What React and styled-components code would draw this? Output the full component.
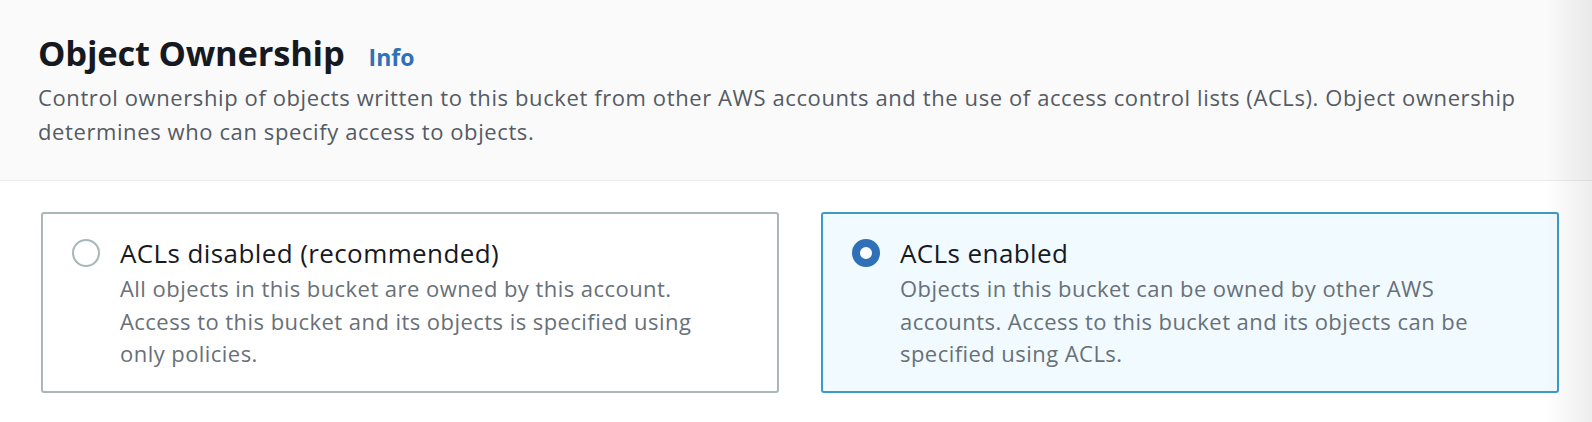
import React, { useState } from 'react';
import styled, { createGlobalStyle } from 'styled-components';

const GlobalStyle = createGlobalStyle`
  html, body {
    margin: 0;
    padding: 0;
    background: #ffffff;
  }
  body {
    font-family: "Open Sans", Roboto, Arial, sans-serif;
    -webkit-font-smoothing: antialiased;
  }
`;

const options = [
  {
    id: 'disabled',
    label: 'ACLs disabled (recommended)',
    description:
      'All objects in this bucket are owned by this account. Access to this bucket and its objects is specified using only policies.',
  },
  {
    id: 'enabled',
    label: 'ACLs enabled',
    description:
      'Objects in this bucket can be owned by other AWS accounts. Access to this bucket and its objects can be specified using ACLs.',
  },
];

const App = () => {
  const [selected, setSelected] = useState('enabled');

  return (
    <>
      <GlobalStyle />
      <Panel>
        <Header>
          <TitleRow>
            <Title>Object Ownership</Title>
            <InfoLink href="#">Info</InfoLink>
          </TitleRow>
          <Description>
            Control ownership of objects written to this bucket from other AWS accounts and the use of
            access control lists (ACLs). Object ownership determines who can specify access to objects.
          </Description>
        </Header>
        <Body>
          <Tiles>
            {options.map((opt) => (
              <Tile
                key={opt.id}
                $selected={selected === opt.id}
                onClick={() => setSelected(opt.id)}
              >
                <Radio $checked={selected === opt.id} />
                <TileText>
                  <TileLabel>{opt.label}</TileLabel>
                  <TileDescription>{opt.description}</TileDescription>
                </TileText>
              </Tile>
            ))}
          </Tiles>
        </Body>
      </Panel>
    </>
  );
};

export default App;

const Panel = styled.div`
  position: relative;
  width: 1592px;
  height: 422px;
  overflow: hidden;
  background: #ffffff;

  &::after {
    content: '';
    position: absolute;
    top: 0;
    right: 0;
    width: 46px;
    height: 100%;
    pointer-events: none;
    background: linear-gradient(to right, rgba(0, 0, 0, 0), rgba(0, 0, 0, 0.07));
  }
`;

const Header = styled.div`
  background: #fafafa;
  border-bottom: 1px solid #e9ebed;
  padding: 31px 30px 0 38px;
  height: 181px;
  box-sizing: border-box;
`;

const TitleRow = styled.div`
  display: flex;
  align-items: baseline;
  gap: 24px;
  height: 44px;
`;

const Title = styled.h2`
  margin: 0;
  font-size: 34.5px;
  line-height: 44px;
  font-weight: 700;
  letter-spacing: -0.2px;
  color: #16191f;
`;

const InfoLink = styled.a`
  font-size: 23px;
  font-weight: 700;
  color: #2f70b6;
  text-decoration: none;
`;

const Description = styled.p`
  margin: 6px 0 0;
  font-size: 22px;
  line-height: 33.5px;
  letter-spacing: 0.6px;
  color: #545b64;
`;

const Body = styled.div`
  padding: 31px 33px 0 41px;
`;

const Tiles = styled.div`
  display: grid;
  grid-template-columns: 738px 738px;
  gap: 42px;
`;

const Tile = styled.div`
  display: flex;
  align-items: flex-start;
  gap: 20px;
  height: 181px;
  box-sizing: border-box;
  padding: 22px 40px 0 29px;
  border: 2px solid ${({ $selected }) => ($selected ? '#3d9ac6' : '#aab7b8')};
  border-radius: 3px;
  background: ${({ $selected }) => ($selected ? '#f1faff' : '#ffffff')};
  cursor: pointer;
`;

const Radio = styled.span`
  flex: none;
  width: 28px;
  height: 28px;
  margin-top: 3px;
  box-sizing: border-box;
  border-radius: 50%;
  border: ${({ $checked }) => ($checked ? '8.5px solid #2f70b6' : '2px solid #aab7b8')};
  background: #ffffff;
`;

const TileText = styled.div`
  display: flex;
  flex-direction: column;
  max-width: 610px;
`;

const TileLabel = styled.div`
  font-size: 26px;
  line-height: 34px;
  letter-spacing: 0.4px;
  color: #16191f;
`;

const TileDescription = styled.div`
  margin-top: 2px;
  font-size: 22px;
  line-height: 32.5px;
  letter-spacing: 0.45px;
  color: #687078;
`;
